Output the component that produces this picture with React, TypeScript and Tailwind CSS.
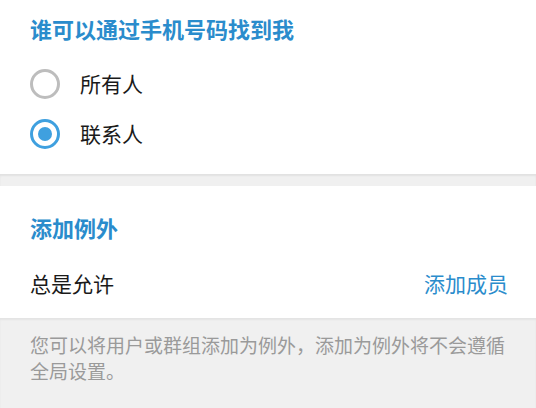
import React from "react";

const font = { fontFamily: '"Microsoft YaHei", "Noto Sans CJK SC", "Noto Sans", sans-serif' };

function Radio({ checked }: { checked: boolean }) {
  return checked ? (
    <div className="w-[30px] h-[30px] rounded-full border-[3px] border-[#3fa0df] flex items-center justify-center">
      <div className="w-[14px] h-[14px] rounded-full bg-[#3fa0df]" />
    </div>
  ) : (
    <div className="w-[30px] h-[30px] rounded-full border-[3px] border-[#bdbdbd]" />
  );
}

export default function App() {
  return (
    <div className="w-[536px] h-[408px] bg-white overflow-hidden" style={font}>
      <div className="bg-white pb-[15px]">
        <div className="h-[56px] flex items-center pl-[30px] text-[22px] font-bold text-[#2a8ccc]">
          谁可以通过手机号码找到我
        </div>
        <div className="mt-[3px]">
          <div className="h-[50px] flex items-center pl-[30px]">
            <Radio checked={false} />
            <span className="ml-[20px] text-[21px] text-[#1a1a1a]">所有人</span>
          </div>
          <div className="h-[50px] flex items-center pl-[30px]">
            <Radio checked={true} />
            <span className="ml-[20px] text-[21px] text-[#1a1a1a]">联系人</span>
          </div>
        </div>
      </div>
      <div className="h-[12px] bg-[#f0f0f0] shadow-[inset_0_2px_2px_rgba(0,0,0,0.06)]" />
      <div className="bg-white pt-[27px] pb-[9px]">
        <div className="h-[28px] flex items-center pl-[30px] text-[22px] font-bold text-[#2a8ccc]">
          添加例外
        </div>
        <div className="mt-[18px] h-[50px] flex items-center justify-between pl-[30px] pr-[28px]">
          <span className="text-[21px] text-[#1a1a1a]">总是允许</span>
          <span className="text-[21px] text-[#2a8ccc]">添加成员</span>
        </div>
      </div>
      <div className="h-[90px] bg-[#f0f0f0] pt-[14px] px-[30px] shadow-[inset_0_2px_2px_rgba(0,0,0,0.05)]">
        <p className="text-[19px] leading-[26px] text-[#9a9a9a]">
          您可以将用户或群组添加为例外，添加为例外将不会遵循全局设置。
        </p>
      </div>
    </div>
  );
}
